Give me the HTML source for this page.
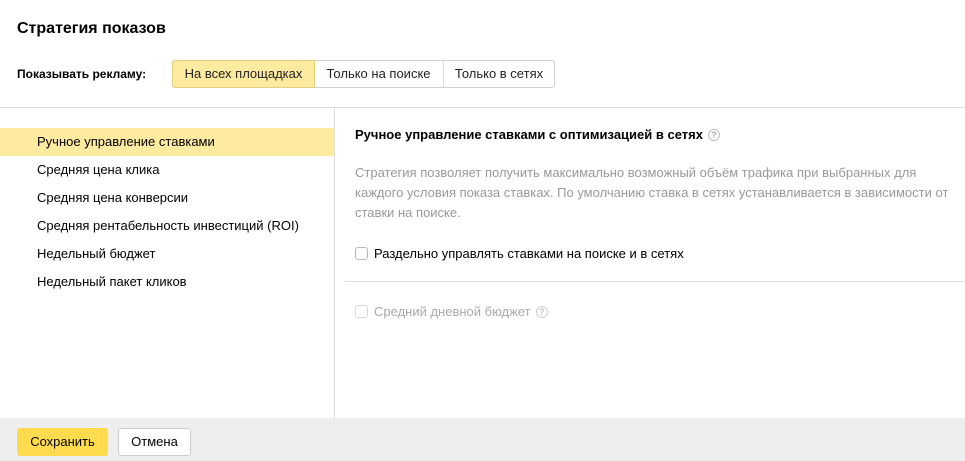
<!DOCTYPE html>
<html><head><meta charset="utf-8"><style>
*{box-sizing:border-box;margin:0;padding:0}
body{width:965px;height:461px;overflow:hidden;background:#fff;font-family:"Liberation Sans",sans-serif;font-size:13px;color:#000;position:relative}
.a{position:absolute;white-space:nowrap}
.tab{position:absolute;top:60px;height:28px;border:1px solid #d0d0d0;line-height:26px;text-align:center;font-size:13px;color:#222}
.it{position:absolute;left:37px;font-size:13px;line-height:16px}
.cb{position:absolute;width:13px;height:13px;border:1px solid #b8b8b8;border-radius:3px;background:#fff}
.q{display:inline-block;width:12px;height:12px;border:1px solid #bbb;border-radius:50%;font-size:9px;line-height:10px;text-align:center;color:#aaa;vertical-align:1px;margin-left:5px}
</style></head><body>
<div class="a" style="left:17px;top:20px;font-size:16px;font-weight:bold">Стратегия показов</div>
<div class="a" style="left:17px;top:67px;font-weight:bold;font-size:12px">Показывать рекламу:</div>
<div class="tab" style="left:172px;width:143px;background:#ffeba0;border-color:#e5cf7a;border-radius:3px 0 0 3px">На всех площадках</div>
<div class="tab" style="left:314px;width:130px;border-left:none">Только на поиске</div>
<div class="tab" style="left:443px;width:112px;border-left:1px solid #ddd;border-radius:0 3px 3px 0">Только в сетях</div>
<div class="a" style="left:0;top:107px;width:965px;height:1px;background:#ddd"></div>
<div class="a" style="left:334px;top:108px;width:1px;height:310px;background:#ddd"></div>
<div class="a" style="left:0;top:128px;width:334px;height:28px;background:#ffeba0"></div>
<div class="it" style="top:134px">Ручное управление ставками</div>
<div class="it" style="top:162px">Средняя цена клика</div>
<div class="it" style="top:190px">Средняя цена конверсии</div>
<div class="it" style="top:218px">Средняя рентабельность инвестиций (ROI)</div>
<div class="it" style="top:246px">Недельный бюджет</div>
<div class="it" style="top:274px">Недельный пакет кликов</div>
<div class="a" style="left:355px;top:127px;font-weight:bold;font-size:13px">Ручное управление ставками с оптимизацией в сетях<span class="q">?</span></div>
<div class="a" style="left:355px;top:163px;color:#999;line-height:20px;font-size:13px">Стратегия позволяет получить максимально возможный объём трафика при выбранных для<br>каждого условия показа ставках. По умолчанию ставка в сетях устанавливается в зависимости от<br>ставки на поиске.</div>
<div class="cb" style="left:355px;top:247px"></div>
<div class="a" style="left:374px;top:246px">Раздельно управлять ставками на поиске и в сетях</div>
<div class="a" style="left:345px;top:281px;width:620px;height:1px;background:#ddd"></div>
<div class="cb" style="left:355px;top:305px;border-color:#d8d8d8"></div>
<div class="a" style="left:374px;top:304px;color:#aaa">Средний дневной бюджет<span class="q" style="border-color:#ccc">?</span></div>
<div class="a" style="left:0;top:418px;width:965px;height:43px;background:#eee"></div>
<div class="a" style="left:17px;top:428px;width:91px;height:28px;background:#ffdb4d;border-radius:3px;text-align:center;line-height:28px">Сохранить</div>
<div class="a" style="left:118px;top:428px;width:73px;height:28px;background:#fff;border:1px solid #ccc;border-radius:3px;text-align:center;line-height:26px">Отмена</div>
</body></html>
